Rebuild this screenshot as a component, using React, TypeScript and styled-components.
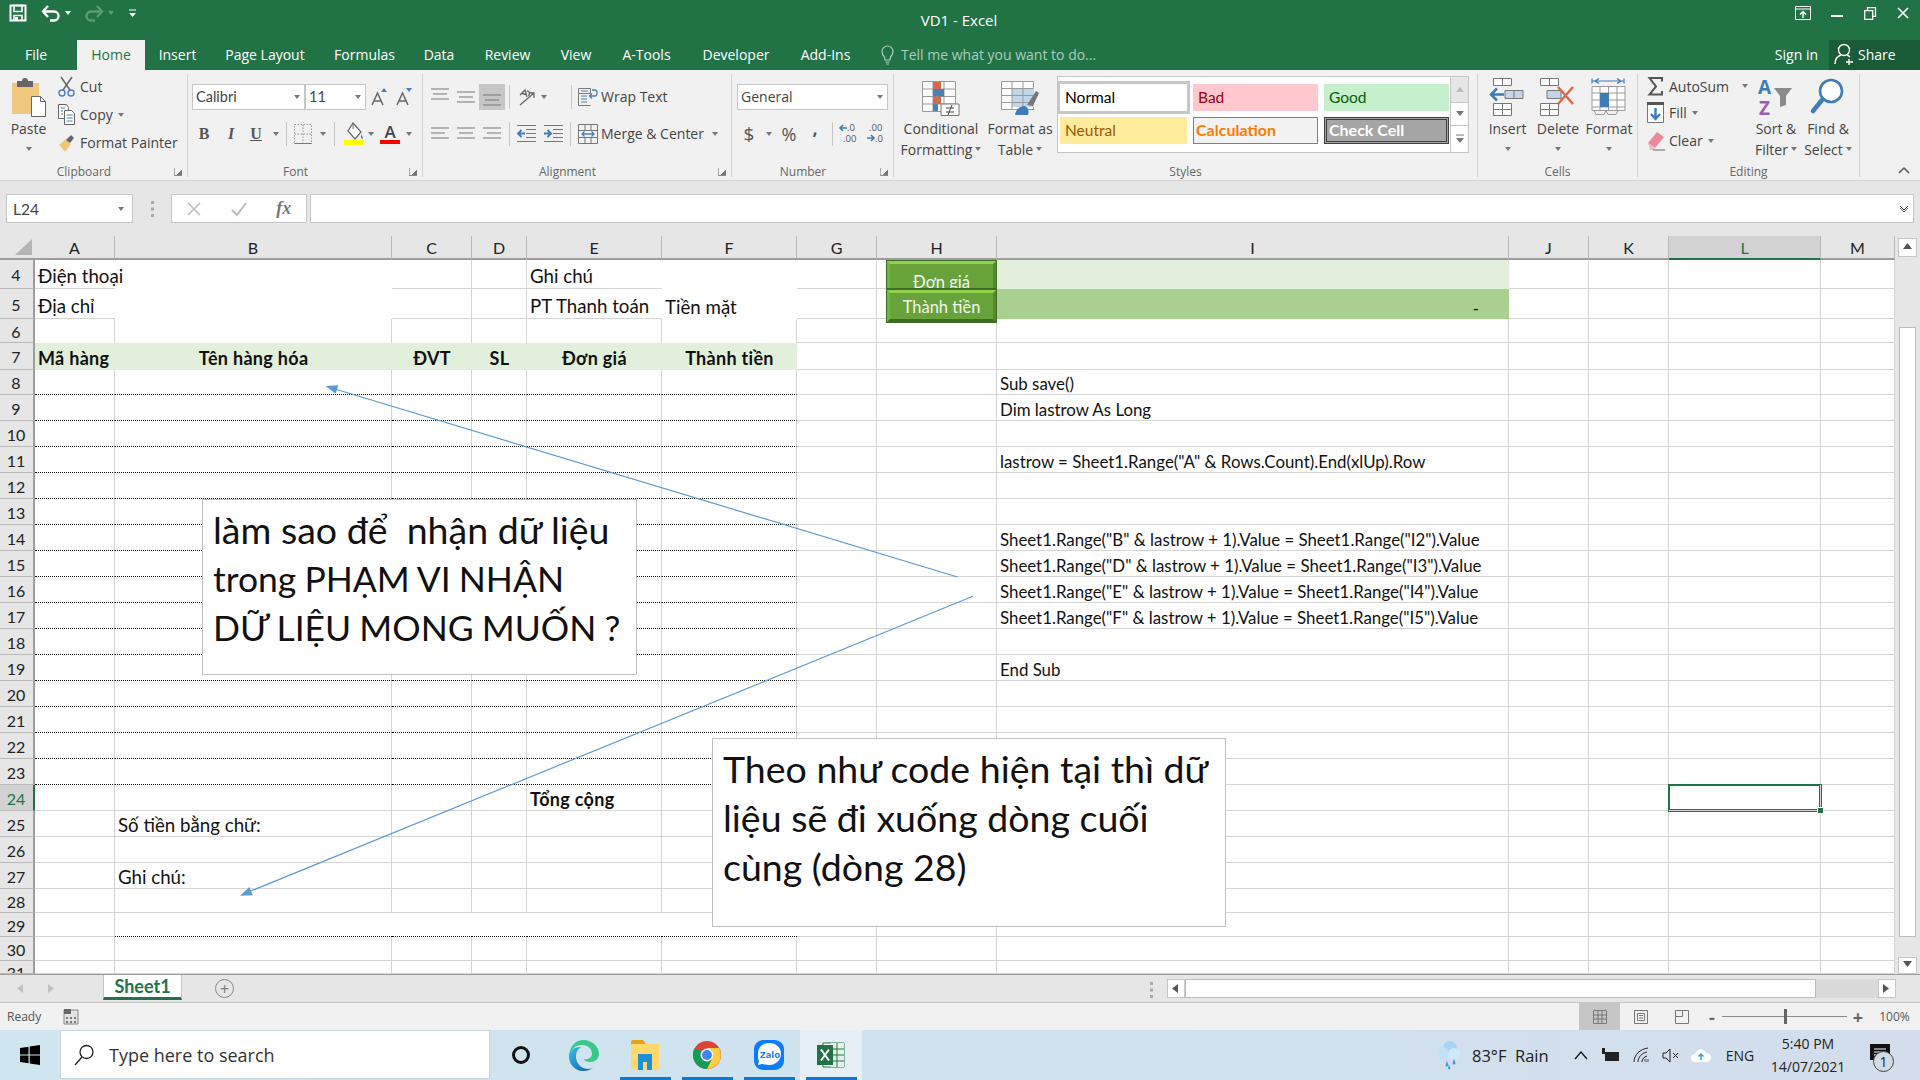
import React from 'react'
import styled, { createGlobalStyle } from 'styled-components'

const Global = createGlobalStyle`
  html, body { margin: 0; padding: 0; width: 1920px; height: 1080px; overflow: hidden; }
  body { font-family: "Open Sans", "Noto Sans", sans-serif; background: #fff; }
  svg { display: block; overflow: visible; }
`

const CELL_FONT = '"Lato", "Noto Sans", sans-serif'
const GREEN = '#217346'
const LINE = '#D4D4D4'

const Window = styled.div`
  width: 1920px;
  height: 1080px;
  display: flex;
  flex-direction: column;
  overflow: hidden;
`

/* ---------- title bar + tabs ---------- */
const TitleBar = styled.div`
  height: 40px;
  background: ${GREEN};
  color: #fff;
  display: grid;
  grid-template-columns: 1fr auto 1fr;
  align-items: flex-start;
`
const Qat = styled.div`
  display: flex;
  align-items: center;
  height: 26px;
  padding-left: 9px;
  gap: 4px;
`
const Title = styled.div`
  font-size: 15px;
  line-height: 41px;
  margin-left: -2px;
`
const WinButtons = styled.div`
  display: flex;
  justify-content: flex-end;
  padding-right: 1px;
`
const WinButton = styled.span`
  width: 33px;
  height: 26px;
  display: flex;
  align-items: center;
  justify-content: center;
`
const TabRow = styled.div`
  height: 30px;
  background: ${GREEN};
  display: flex;
`
const Tab = styled.div<{ $w: number; $active?: boolean; $shift?: number }>`
  width: ${p => p.$w}px;
  display: flex;
  align-items: center;
  justify-content: center;
  padding-right: ${p => p.$shift ?? 0}px;
  box-sizing: border-box;
  font-size: 14px;
  color: ${p => (p.$active ? GREEN : '#fff')};
  background: ${p => (p.$active ? '#F1F1F1' : 'transparent')};
`
const TellMe = styled.div`
  display: flex;
  align-items: center;
  gap: 7px;
  margin-left: 15px;
  font-size: 14px;
  color: #a9cdb9;
  flex: 1;
`
const SignIn = styled.div`
  color: #fff;
  font-size: 14px;
  display: flex;
  align-items: center;
  margin-right: 11px;
`
const Share = styled.div`
  width: 91px;
  background: #1a5c37;
  color: #fff;
  font-size: 14px;
  display: flex;
  align-items: center;
  gap: 2px;
  padding-left: 5px;
  box-sizing: border-box;
`

/* ---------- ribbon ---------- */
const Ribbon = styled.div`
  height: 112px;
  box-sizing: border-box;
  background: #F1F1F1;
  border-bottom: 1px solid #D2D2D2;
  padding-top: 4px;
  display: flex;
  color: #444;
  font-size: 14px;
`
const Group = styled.div<{ $w: number }>`
  width: ${p => p.$w}px;
  height: 103px;
  box-sizing: border-box;
  border-right: 1px solid #D2D2D2;
  display: flex;
  flex-direction: column;
  flex-shrink: 0;
`
const GroupBody = styled.div<{ $pad?: number; $column?: boolean; $gap?: number; $top?: number }>`
  height: 91px;
  display: flex;
  flex-direction: ${p => (p.$column ? 'column' : 'row')};
  padding-left: ${p => p.$pad ?? 0}px;
  padding-top: ${p => p.$top ?? 0}px;
  gap: ${p => p.$gap ?? 0}px;
  box-sizing: border-box;
`
const GroupLabel = styled.div<{ $launch?: boolean }>`
  height: 12px;
  line-height: 12px;
  font-size: 12px;
  color: #666;
  text-align: center;
  position: relative;
  top: 1px;
  padding-right: ${p => (p.$launch ? 19 : 0)}px;
`
const Launcher = styled.span`
  position: absolute;
  right: 5px;
  top: 2px;
  width: 7px;
  height: 7px;
  border-left: 1px solid #aaa;
  border-bottom: 1px solid #888;
  background: linear-gradient(135deg, transparent 60%, #777 60%);
`
const Caret = styled.span<{ $tone?: string }>`
  display: inline-block;
  width: 0;
  height: 0;
  border-left: 3.5px solid transparent;
  border-right: 3.5px solid transparent;
  border-top: 4px solid ${p => p.$tone ?? '#777'};
  vertical-align: middle;
`
const LargeButton = styled.div<{ $w: number }>`
  width: ${p => p.$w}px;
  display: flex;
  flex-direction: column;
  align-items: center;
  white-space: nowrap;
`
const LargeIcon = styled.div`
  height: 42px;
  margin-bottom: 2px;
  display: flex;
  align-items: flex-end;
  justify-content: center;
`
const LargeText = styled.div`
  height: 21px;
  line-height: 21px;
`
const CaretLine = styled.div`
  height: 21px;
  display: flex;
  align-items: center;
  justify-content: center;
  gap: 3px;
`
const SmallColumn = styled.div<{ $w?: number }>`
  display: flex;
  flex-direction: column;
  margin-top: -1px;
  width: ${p => (p.$w ? `${p.$w}px` : 'auto')};
`
const SmallRow = styled.div<{ $h?: number }>`
  height: ${p => p.$h ?? 28}px;
  display: flex;
  align-items: center;
  gap: 5px;
  white-space: nowrap;
`
const SmallIcon = styled.span<{ $w?: number }>`
  width: ${p => p.$w ?? 18}px;
  display: flex;
  justify-content: center;
`
const WideCaret = styled(Caret)`
  margin-left: 8px;
`
const ToolRow = styled.div`
  display: flex;
  align-items: center;
  height: 26px;
`
const Tool = styled.span<{ $w: number; $active?: boolean }>`
  width: ${p => p.$w}px;
  height: 26px;
  flex-shrink: 0;
  display: flex;
  align-items: center;
  justify-content: center;
  background: ${p => (p.$active ? '#C6C6C6' : 'transparent')};
`
const ToolSep = styled.span<{ $w: number }>`
  width: ${p => p.$w}px;
  height: 24px;
  flex-shrink: 0;
  display: flex;
  justify-content: center;
  &::after {
    content: '';
    width: 1px;
    height: 100%;
    background: #C6C6C6;
  }
`
const Combo = styled.div<{ $w: number }>`
  width: ${p => p.$w}px;
  height: 26px;
  box-sizing: border-box;
  background: #fff;
  border: 1px solid #C6C6C6;
  display: flex;
  align-items: center;
  justify-content: space-between;
  padding: 0 4px 0 3px;
  flex-shrink: 0;
`
const ComboFont = styled.span`
  font-family: ${CELL_FONT};
  font-size: 14.5px;
  color: #444;
`
const BoldTool = styled.span<{ $italic?: boolean; $under?: boolean }>`
  font-family: "Liberation Serif", serif;
  font-weight: 700;
  font-size: 16px;
  color: #555;
  font-style: ${p => (p.$italic ? 'italic' : 'normal')};
  text-decoration: ${p => (p.$under ? 'underline' : 'none')};
`
const SymbolTool = styled.span<{ $size?: number; $lift?: number }>`
  font-family: "Open Sans", sans-serif;
  font-size: ${p => p.$size ?? 15}px;
  color: #555;
  margin-top: ${p => -(p.$lift ?? 0)}px;
`
const ColorA = styled.span<{ $bar: string }>`
  font-family: "Open Sans", sans-serif;
  font-size: 17px;
  line-height: 16px;
  font-weight: 600;
  color: #444;
  border-bottom: 4px solid ${p => p.$bar};
  width: 20px;
  text-align: center;
`
const Gallery = styled.div`
  width: 412px;
  height: 77px;
  margin-top: 2px;
  box-sizing: border-box;
  border: 1px solid #C6C6C6;
  background: #fff;
  display: flex;
  justify-content: space-between;
`
const StyleGrid = styled.div`
  display: grid;
  grid-template-columns: 127px 125px 125px;
  grid-template-rows: 27px 27px;
  column-gap: 6px;
  row-gap: 6px;
  padding: 7px 0 0 2px;
`
const StyleCell = styled.div<{ $bg: string; $fg: string; $bold?: boolean; $border?: string; $selected?: boolean }>`
  background: ${p => p.$bg};
  color: ${p => p.$fg};
  font-family: ${CELL_FONT};
  font-size: ${p => (p.$bold ? 16 : 15.5)}px;
  font-weight: ${p => (p.$bold ? 700 : 400)};
  border: ${p => p.$border ?? 'none'};
  box-shadow: ${p => (p.$selected ? '0 0 0 3px #C6C6C6' : 'none')};
  display: flex;
  align-items: center;
  padding: 0 0 1px ${p => (p.$border ? 2 : 5)}px;
  box-sizing: border-box;
  white-space: nowrap;
`
const GalleryScroll = styled.div`
  width: 17px;
  border-left: 1px solid #C6C6C6;
  display: grid;
  grid-template-rows: 26px 23px 1fr;
`
const GalleryButton = styled.span<{ $bg?: string }>`
  background: ${p => p.$bg ?? '#fff'};
  border-bottom: 1px solid #C6C6C6;
  display: flex;
  align-items: center;
  justify-content: center;
  &:last-child { border-bottom: none; }
`
const Collapse = styled.div`
  flex: 1;
  height: 103px;
  display: flex;
  align-items: flex-end;
  justify-content: flex-end;
  padding: 0 10px 3px 0;
  box-sizing: border-box;
`

/* ---------- formula bar ---------- */
const FormulaBar = styled.div`
  height: 55px;
  box-sizing: border-box;
  background: #E6E6E6;
  padding: 13px 6px 13px 6px;
  display: flex;
`
const Box = styled.div<{ $w?: number }>`
  ${p => (p.$w ? `width: ${p.$w}px;` : 'flex: 1;')}
  height: 29px;
  box-sizing: border-box;
  background: #fff;
  border: 1px solid #C6C6C6;
  display: flex;
  align-items: center;
`
const NameBox = styled(Box)`
  justify-content: space-between;
  padding: 0 8px 0 6px;
  font-family: ${CELL_FONT};
  font-size: 15.5px;
  color: #444;
`
const Dots = styled.div`
  width: 38px;
  display: flex;
  align-items: center;
  justify-content: center;
`
const FormulaButton = styled.span`
  width: 45px;
  display: flex;
  justify-content: center;
`
const Fx = styled.span`
  font-family: "Liberation Serif", serif;
  font-style: italic;
  font-size: 18px;
  font-weight: 700;
  color: #777;
`
const FormulaInput = styled(Box)`
  margin-left: 3px;
  justify-content: flex-end;
  padding-right: 4px;
`

/* ---------- sheet ---------- */
const SheetArea = styled.div`
  height: 738px;
  display: flex;
`
const SheetView = styled.div`
  position: relative;
  width: 1895px;
  height: 738px;
  overflow: hidden;
  background: #fff;
`
const Grid = styled.div<{ $cols: string; $rows: string }>`
  display: grid;
  grid-template-columns: ${p => p.$cols};
  grid-template-rows: ${p => p.$rows};
`
const Corner = styled.div`
  background: #E6E6E6;
  border-bottom: 2px solid #9D9D9D;
  box-sizing: border-box;
  display: flex;
  align-items: flex-end;
  justify-content: flex-end;
  padding: 0 3px 3px 0;
`
const ColHead = styled.div<{ $sel?: boolean }>`
  background: ${p => (p.$sel ? '#D2D2D2' : '#E6E6E6')};
  border-right: 1px solid #B9B9B9;
  border-bottom: 2px solid ${p => (p.$sel ? GREEN : '#9D9D9D')};
  box-sizing: border-box;
  font-family: ${CELL_FONT};
  font-size: 16px;
  color: ${p => (p.$sel ? GREEN : '#222')};
  display: flex;
  align-items: center;
  justify-content: center;
`
const RowHead = styled.div<{ $sel?: boolean; $cut?: boolean }>`
  background: ${p => (p.$sel ? '#D2D2D2' : '#E6E6E6')};
  border-right: ${p => (p.$sel ? `2px solid ${GREEN}` : '2px solid #9D9D9D')};
  border-bottom: 1px solid #B9B9B9;
  box-sizing: border-box;
  font-family: ${CELL_FONT};
  font-size: 16px;
  line-height: 20px;
  color: ${p => (p.$sel ? GREEN : '#222')};
  display: flex;
  align-items: ${p => (p.$cut ? 'flex-start' : 'center')};
  justify-content: center;
  padding: 2px 1px 0 0;
  overflow: hidden;
  min-height: 0;
`
const Cell = styled.div<{
  $bg?: string
  $right?: boolean
  $bottom?: 'solid' | 'dotted' | 'none'
  $bold?: boolean
  $code?: boolean
  $raised?: boolean
  $align?: 'left' | 'center' | 'right'
  $selected?: boolean
}>`
  box-sizing: border-box;
  background: ${p => p.$bg ?? 'transparent'};
  border-right: ${p => (p.$right ? `1px solid ${LINE}` : 'none')};
  border-bottom: ${p =>
    p.$bottom === 'dotted' ? '1px dotted #111' : p.$bottom === 'none' ? 'none' : `1px solid ${LINE}`};
  box-shadow: ${p => (p.$selected ? `0 0 0 1px ${GREEN}, inset 0 0 0 1px ${GREEN}` : 'none')};
  z-index: ${p => (p.$selected ? 1 : 'auto')};
  position: relative;
  min-width: 0;
  min-height: 0;
  display: flex;
  align-items: flex-end;
  justify-content: ${p => (p.$align === 'center' ? 'center' : p.$align === 'right' ? 'flex-end' : 'flex-start')};
  padding: 0 ${p => (p.$align === 'right' ? 30 : 3)}px ${p => (p.$code ? 0 : p.$raised ? 2 : 1)}px 3px;
  font-family: ${CELL_FONT};
  font-size: ${p => (p.$code ? 16.85 : p.$bold ? 18 : 18.7)}px;
  letter-spacing: ${p => (p.$bold ? 0.3 : 0)}px;
  line-height: 20px;
  font-weight: ${p => (p.$bold ? 700 : 400)};
  color: #111;
  white-space: nowrap;
  &::after {
    content: ${p => (p.$selected ? "''" : 'none')};
    position: absolute;
    right: -4px;
    bottom: -4px;
    width: 7px;
    height: 7px;
    background: ${GREEN};
    border: 1px solid #fff;
    box-sizing: border-box;
  }
`
const ArrowLayer = styled.svg`
  position: absolute;
  left: 0;
  top: 0;
  pointer-events: none;
`
const ShapeStack = styled.div`
  position: absolute;
  left: 886px;
  top: 24px;
  width: 111px;
  display: flex;
  flex-direction: column;
`
const Bevel = styled.div<{ $h: number; $clip?: boolean }>`
  height: ${p => p.$h}px;
  box-sizing: border-box;
  background: #68A23A;
  border-style: solid;
  border-width: ${p => (p.$clip ? '4px 4px 1px' : '4px')};
  border-color: #8ED24E #57892F #3F6B24 #76B145;
  outline: 1px solid #3F6B24;
  outline-offset: -1px;
  color: #F4F9EE;
  font-family: ${CELL_FONT};
  font-size: 16.5px;
  line-height: 20px;
  text-align: center;
  white-space: nowrap;
  overflow: hidden;
  padding-top: ${p => (p.$clip ? 8 : 4)}px;
`
const Note = styled.div<{ $x: number; $y: number; $w: number; $h: number }>`
  position: absolute;
  left: ${p => p.$x}px;
  top: ${p => p.$y}px;
  width: ${p => p.$w}px;
  height: ${p => p.$h}px;
  box-sizing: border-box;
  background: #fff;
  border: 1px solid #BFBFBF;
  padding: 5px 10px;
  font-family: ${CELL_FONT};
  font-size: 37.5px;
  line-height: 49px;
  color: #111;
`
const NoteLine = styled.div<{ $caps?: boolean }>`
  height: 40px;
  margin-bottom: 9px;
  line-height: 49px;
  white-space: pre;
  word-spacing: ${p => (p.$caps ? '-1px' : '0')};
  font-size: ${p => (p.$caps ? 35.5 : 37.5)}px;
`
const VScroll = styled.div`
  width: 25px;
  height: 738px;
  background: #E6E6E6;
  display: flex;
  flex-direction: column;
  align-items: center;
  padding-top: 2px;
  box-sizing: border-box;
`
const ScrollButton = styled.div<{ $h: number }>`
  width: 19px;
  height: ${p => p.$h}px;
  background: #fff;
  border: 1px solid #C6C6C6;
  box-sizing: border-box;
  display: flex;
  align-items: center;
  justify-content: center;
`
const VThumb = styled.div`
  width: 17px;
  height: 610px;
  margin: 70px 0 20px;
  background: #fff;
  border: 1px solid #BDBDBD;
  box-sizing: border-box;
`

/* ---------- sheet tabs + status ---------- */
const SheetTabs = styled.div`
  height: 29px;
  box-sizing: border-box;
  background: #E6E6E6;
  border-top: 1px solid #9D9D9D;
  border-bottom: 1px solid #C6C6C6;
  display: flex;
  align-items: flex-start;
`
const TabNav = styled.div`
  width: 103px;
  height: 27px;
  display: flex;
  align-items: center;
  justify-content: center;
  gap: 22px;
  padding-right: 30px;
  box-sizing: border-box;
`
const SheetTab = styled.div`
  width: 79px;
  height: 25px;
  box-sizing: border-box;
  background: #fff;
  border-bottom: 3px solid ${GREEN};
  border-left: 1px solid #C6C6C6;
  border-right: 1px solid #C6C6C6;
  color: ${GREEN};
  font-family: ${CELL_FONT};
  font-weight: 700;
  font-size: 18px;
  line-height: 22px;
  text-align: center;
`
const AddSheet = styled.div`
  margin-left: 33px;
  margin-top: 4px;
  width: 19px;
  height: 19px;
  box-sizing: border-box;
  border: 1.5px solid #8a8a8a;
  border-radius: 50%;
  display: flex;
  align-items: center;
  justify-content: center;
  color: #777;
  font-size: 16px;
  line-height: 16px;
`
const TabDots = styled.div`
  margin-left: 916px;
  margin-top: 7px;
`
const HScroll = styled.div`
  margin-left: 14px;
  margin-top: 4px;
  width: 729px;
  height: 19px;
  display: flex;
`
const HButton = styled.div`
  width: 18px;
  background: #fff;
  display: flex;
  align-items: center;
  justify-content: center;
  border: 1px solid #C6C6C6;
  box-sizing: border-box;
`
const HThumb = styled.div`
  width: 631px;
  background: #fff;
  border: 1px solid #BDBDBD;
  box-sizing: border-box;
`
const HTrack = styled.div`
  flex: 1;
  background: #DADADA;
`
const StatusBar = styled.div`
  height: 27px;
  background: #F1F1F1;
  display: flex;
  align-items: center;
  font-size: 12px;
  color: #555;
  padding-left: 7px;
`
const StatusMacro = styled.span`
  margin-left: 22px;
`
const ViewButtons = styled.div`
  margin-left: auto;
  display: flex;
  align-items: center;
  height: 27px;
`
const ViewButton = styled.span<{ $active?: boolean; $w?: number }>`
  width: ${p => p.$w ?? 41}px;
  height: 27px;
  display: flex;
  align-items: center;
  justify-content: center;
  background: ${p => (p.$active ? '#C6C6C6' : 'transparent')};
`
const ZoomSign = styled.b`
  font-size: 18px;
  color: #666;
`
const ZoomSlider = styled.div`
  position: relative;
  width: 125px;
  height: 1px;
  background: #8a8a8a;
`
const ZoomThumb = styled.span`
  position: absolute;
  left: 62px;
  top: -7px;
  width: 3px;
  height: 15px;
  background: #666;
`

/* ---------- taskbar ---------- */
const Taskbar = styled.div`
  height: 50px;
  background: linear-gradient(90deg, #CFE5EF 0%, #CFE3EE 50%, #D3DDEB 100%);
  display: flex;
  align-items: stretch;
`
const StartButton = styled.div`
  width: 60px;
  display: flex;
  align-items: center;
  justify-content: center;
`
const SearchBox = styled.div`
  width: 430px;
  height: 49px;
  box-sizing: border-box;
  background: #fff;
  border: 1px solid #C9D3D9;
  display: flex;
  align-items: center;
  padding-left: 13px;
  gap: 15px;
  font-size: 18px;
  color: #333;
`
const TaskItem = styled.div<{ $running?: boolean; $active?: boolean }>`
  width: 62px;
  position: relative;
  display: flex;
  align-items: center;
  justify-content: center;
  background: ${p => (p.$active ? '#E4F0F5' : 'transparent')};
  &::after {
    content: ${p => (p.$running ? "''" : 'none')};
    position: absolute;
    left: 6px;
    right: 5px;
    bottom: 0;
    height: 3px;
    background: #0F78D4;
  }
`
const Tray = styled.div`
  margin-left: auto;
  display: flex;
  align-items: center;
`
const TrayTool = styled.span<{ $w: number }>`
  width: ${p => p.$w}px;
  display: flex;
  align-items: center;
  justify-content: center;
  font-size: 14px;
  color: #222;
`
const Weather = styled.span`
  font-size: 16.5px;
  color: #222;
  width: 83px;
  margin: 0 14px 0 5px;
  white-space: pre;
`
const Clock = styled.div`
  width: 88px;
  font-size: 14px;
  color: #222;
  text-align: center;
  line-height: 23px;
`
const Notify = styled.div`
  width: 68px;
  height: 50px;
  position: relative;
  display: flex;
  align-items: center;
  justify-content: center;
  padding-right: 12px;
  box-sizing: border-box;
`
const NotifyBadge = styled.span`
  position: absolute;
  left: 21px;
  top: 21px;
  width: 21px;
  height: 21px;
  box-sizing: border-box;
  border: 1px solid #444;
  border-radius: 50%;
  background: #D0DBE8;
  font-size: 14px;
  color: #222;
  text-align: center;
  line-height: 19px;
`

/* ---------- icons ---------- */
const Svg: React.FC<{ w: number; h: number; children: React.ReactNode }> = ({ w, h, children }) => (
  <svg width={w} height={h} viewBox={`0 0 ${w} ${h}`} fill="none">
    {children}
  </svg>
)

const SaveIcon = () => (
  <Svg w={18} h={18}>
    <path d="M1.5 1.5h15v15h-15z" stroke="#fff" strokeWidth="2" />
    <path d="M5 1.5h8v6H5zM5 16.5v-5h8v5" stroke="#fff" strokeWidth="1.6" />
    <path d="M6 13h3v3H6z" fill="#fff" />
  </Svg>
)
const UndoIcon = ({ tone }: { tone: string }) => (
  <Svg w={20} h={18}>
    <path d="M2 7.5h11a4.5 4.5 0 0 1 0 9H9" stroke={tone} strokeWidth="2.4" />
    <path d="M7 2L2 7.5 7 13" stroke={tone} strokeWidth="2.4" />
  </Svg>
)
const RedoIcon = ({ tone }: { tone: string }) => (
  <Svg w={20} h={18}>
    <path d="M18 7.5H7a4.5 4.5 0 0 0 0 9h4" stroke={tone} strokeWidth="2.4" />
    <path d="M13 2l5 5.5-5 5.5" stroke={tone} strokeWidth="2.4" />
  </Svg>
)
const CustomizeIcon = () => (
  <Svg w={9} h={10}>
    <path d="M1 2h7" stroke="#fff" />
    <path d="M1 5h7L4.5 9z" fill="#fff" />
  </Svg>
)
const RibbonOptions = () => (
  <Svg w={17} h={15}>
    <path d="M.5.5h15v13H.5z" stroke="#fff" />
    <path d="M.5 3h15" stroke="#fff" />
    <path d="M8 12V6M5 8.5L8 5.5l3 3" stroke="#fff" strokeWidth="1.4" />
  </Svg>
)
const Minimize = () => (
  <Svg w={12} h={12}>
    <path d="M0 9h12" stroke="#fff" strokeWidth="2" />
  </Svg>
)
const Restore = () => (
  <Svg w={12} h={13}>
    <path d="M.7 3.7h8v8.6h-8zM3.5 3.5V.7h8v8.6H9" stroke="#fff" strokeWidth="1.3" />
  </Svg>
)
const CloseX = () => (
  <Svg w={12} h={12}>
    <path d="M1 1l10 10M11 1L1 11" stroke="#fff" strokeWidth="1.7" />
  </Svg>
)
const Bulb = () => (
  <Svg w={13} h={20}>
    <path d="M3.5 12C2 10.5 1 9 1 6.5a5.5 5.5 0 0 1 11 0C12 9 11 10.5 9.5 12L9 15H4z" stroke="#a9cdb9" strokeWidth="1.2" />
    <path d="M4.5 17h4M5 19h3" stroke="#a9cdb9" />
  </Svg>
)
const ShareIcon = () => (
  <Svg w={22} h={23}>
    <circle cx="10" cy="7" r="5.5" stroke="#fff" strokeWidth="1.4" />
    <path d="M1 21c0-5 3-8 6-9M13 12c1 .4 2 1 3 2" stroke="#fff" strokeWidth="1.4" />
    <path d="M15 16v6M12 19h7" stroke="#fff" strokeWidth="1.4" />
  </Svg>
)
const PasteIcon = () => (
  <Svg w={36} h={38}>
    <path d="M1 5h27v31H1z" fill="#EFC77F" />
    <path d="M6 3h5a3 3 0 0 1 6 0h5v6H6z" fill="#666" />
    <path d="M20.5 18.5h9l5 5v15h-14z" fill="#fff" stroke="#666" />
    <path d="M29.5 18.5v5h5" stroke="#666" />
  </Svg>
)
const CutIcon = () => (
  <Svg w={17} h={22}>
    <path d="M3 1l9 13M14 1L5 14" stroke="#666" strokeWidth="1.5" />
    <circle cx="4" cy="17" r="3" stroke="#4A80B8" strokeWidth="1.4" />
    <circle cx="13" cy="17" r="3" stroke="#4A80B8" strokeWidth="1.4" />
  </Svg>
)
const CopyIcon = () => (
  <Svg w={17} h={21}>
    <path d="M.5.5h8l2 3v11H.5z" fill="#fff" stroke="#666" />
    <path d="M6.5 6.5h7l3 3v11h-10z" fill="#fff" stroke="#666" />
    <path d="M3 4h4M3 7h2M3 10h2M8.5 11h6M8.5 14h6M8.5 17h6" stroke="#4A80B8" />
  </Svg>
)
const PainterIcon = () => (
  <Svg w={18} h={20}>
    <path d="M2 12l7-6 5 5-6 8c-2-3-4-5-6-7z" fill="#EFC77F" />
    <path d="M9 7l5-5 3 3-4 5z" fill="#666" />
  </Svg>
)
const GrowA = ({ up }: { up?: boolean }) => (
  <Svg w={16} h={20}>
    <path d="M1 18L6.5 6 12 18M3 14h7" stroke="#666" strokeWidth="1.5" />
    <path d={up ? 'M10 5l3-4 3 4z' : 'M10 1h6l-3 4z'} fill="#4A80B8" />
  </Svg>
)
const Lines = ({ y = 0, align = 'center' }: { y?: number; align?: 'left' | 'center' | 'right' }) => {
  const midX = align === 'left' ? 0 : align === 'right' ? 4 : 2
  return (
    <Svg w={18} h={16}>
      <path d={`M0 ${y + 2}h18`} stroke="#777" />
      <path d={`M${midX} ${y + 7}h14`} stroke="#777" />
      <path d={`M0 ${y + 12}h18`} stroke="#777" />
    </Svg>
  )
}
const OrientIcon = () => (
  <Svg w={20} h={20}>
    <path d="M3 8l5-5 2 7M5 6.5l4 1" stroke="#666" strokeWidth="1.3" />
    <path d="M10 4c3 0 3 3 1.5 5" stroke="#666" strokeWidth="1.3" />
    <path d="M3 18L17 6M12 6h5v5" stroke="#666" strokeWidth="1.3" />
  </Svg>
)
const WrapIcon = () => (
  <Svg w={20} h={20}>
    <path d="M.5 1.5h12v5H.5zM.5 6.5v12h12" stroke="#777" />
    <path d="M3 4h7M3 9h6M3 12h6M3 15h6" stroke="#4A80B8" />
    <path d="M14 3h3q2 0 2 3t-2 3h-5M14 6.5L11.5 9l2.5 2.5" stroke="#4A80B8" strokeWidth="1.3" />
  </Svg>
)
const MergeIcon = () => (
  <Svg w={20} h={20}>
    <path d="M.5.5h19v19H.5zM.5 6.5h19M.5 13.5h19M7 .5v6M13 .5v6M7 13.5v6M13 13.5v6" stroke="#777" />
    <path d="M4 10h12M6.5 7.5L4 10l2.5 2.5M13.5 7.5L16 10l-2.5 2.5" stroke="#4A80B8" strokeWidth="1.3" />
  </Svg>
)
const IndentIcon = ({ out }: { out?: boolean }) => (
  <Svg w={19} h={19}>
    <path d="M0 1.5h19M0 17.5h19M9 5.5h10M9 9.5h10M9 13.5h10" stroke="#777" />
    <path
      d={out ? 'M8 9.5H1M4.5 6L1 9.5 4.5 13' : 'M0 9.5h7M3.5 6L7 9.5 3.5 13'}
      stroke="#3E7CB9"
      strokeWidth="1.8"
    />
  </Svg>
)
const BordersIcon = () => (
  <Svg w={18} h={20}>
    <path d="M.5.5h17v19H.5zM9 .5v19M.5 10h17" stroke="#999" strokeDasharray="1.5 1.5" />
    <path d="M.5 19.5h17" stroke="#777" />
  </Svg>
)
const FillIcon = () => (
  <Svg w={20} h={23}>
    <path d="M9 1l8 9-6 7-7-8z" fill="#fff" stroke="#666" strokeWidth="1.2" />
    <path d="M9 1v6" stroke="#666" />
    <path d="M17 12c1 2 2 3 2 4s-1 1-2 0z" fill="#4A80B8" />
    <path d="M0 18h20v5H0z" fill="#FFFF00" />
  </Svg>
)
const DecIcon = ({ more }: { more?: boolean }) => (
  <Svg w={24} h={24}>
    <text x={more ? 7 : 11} y="9" fontSize="9.5" fontFamily="Open Sans" fill="#555">
      {more ? '.00' : '.0'}
    </text>
    <text x={more ? 13 : 7} y="20" fontSize="9.5" fontFamily="Open Sans" fill="#555">
      {more ? '.0' : '.00'}
    </text>
    <path
      d={more ? 'M5 16h7M9 13l3 3-3 3' : 'M11 6H4M7 3L4 6l3 3'}
      stroke="#3E7CB9"
      strokeWidth="1.6"
    />
  </Svg>
)
const CondIcon = () => (
  <Svg w={38} h={35}>
    <path d="M.5.5h33v30H.5z" fill="#fff" stroke="#999" />
    <path d="M.5 8h33M.5 15.5h33M.5 23h33M11 .5v30M22 .5v30" stroke="#999" />
    <path d="M11 1h8v7h-8z" fill="#D9694A" />
    <path d="M11 8h11v7.5H11z" fill="#4A80B8" />
    <path d="M11 15.5h8V23h-8z" fill="#D9694A" />
    <path d="M11 23h5v7h-5z" fill="#4A80B8" />
    <path d="M19 23h18v11.5H19z" fill="#fff" stroke="#777" />
    <path d="M24 27h8M24 31h8M26 34l4-10" stroke="#444" />
  </Svg>
)
const TableIcon = () => (
  <Svg w={38} h={35}>
    <path d="M.5.5h32v28H.5z" fill="#fff" stroke="#999" />
    <path d="M11 7h22v19H11z" fill="#C3D5EA" />
    <path d="M.5 7.5h32M.5 14.5h32M.5 21.5h32M11 .5v28M22 .5v28" stroke="#999" />
    <path d="M26 24l9-14 3 2-6 13z" fill="#777" />
    <path d="M14 34c1-6 5-9 10-9 4 2 4 6 3 9z" fill="#3E7CB9" />
  </Svg>
)
const InsertIcon = () => (
  <Svg w={36} h={38}>
    <path d="M3.5.5h18v7h-18zM12.5.5v7" fill="#fff" stroke="#777" />
    <path d="M15 12.5h18v8H15zM24 12.5v8" fill="#C3D5EA" stroke="#777" />
    <path d="M3.5 25.5h18v12h-18zM3.5 31.5h18M12.5 25.5v12" fill="#fff" stroke="#777" />
    <path d="M14 16.5H1M7 10.5L1 16.5l6 6" stroke="#3E7CB9" strokeWidth="2.5" />
  </Svg>
)
const DeleteIcon = () => (
  <Svg w={36} h={38}>
    <path d="M.5.5h18v7H.5zM9.5.5v7" fill="#fff" stroke="#777" />
    <path d="M7 12.5h14v8H7z" fill="#C3D5EA" stroke="#777" />
    <path d="M.5 25.5h18v12H.5zM.5 31.5h18M9.5 25.5v12" fill="#fff" stroke="#777" />
    <path d="M18 9l15 17M33 9L18 26" stroke="#D9694A" strokeWidth="2.5" />
  </Svg>
)
const FormatIcon = () => (
  <Svg w={36} h={38}>
    <path d="M1 3h32M1 .5v5M33 .5v5M8 .5L4 3l4 2.5M26 .5L30 3l-4 2.5" stroke="#3E7CB9" strokeWidth="1.2" />
    <path d="M1 8.5h33v24H1z" fill="#fff" stroke="#999" />
    <path d="M1 15h33M1 22h33M1 29h33M9 8.5v24M26 8.5v24M17.5 8.5v24" stroke="#999" />
    <path d="M9 15h9v14H9z" fill="#3E7CB9" />
    <path d="M3 32.5l2 4h8l2-4M15 32.5l2 4h8l2-4" stroke="#999" />
  </Svg>
)
const SigmaIcon = () => (
  <Svg w={15} h={19}>
    <path d="M14 4.5V1H1.5L8 9.5 1.5 17.5H14V14" stroke="#555" strokeWidth="2" />
  </Svg>
)
const FillDown = () => (
  <Svg w={17} h={21}>
    <path d="M.5.5h16v20H.5z" fill="#fff" stroke="#777" />
    <path d="M0 0h17v3H0z" fill="#555" />
    <path d="M8.5 6v11M4 12l4.5 5 4.5-5" stroke="#3E7CB9" strokeWidth="2.4" />
  </Svg>
)
const Eraser = () => (
  <Svg w={18} h={20}>
    <path d="M1 12l9-11 7 5-9 11z" fill="#EB8A9A" />
    <path d="M1 12l7 5-1.5 2H3z" fill="#F3B7C0" />
    <path d="M6 19h12" stroke="#666" />
  </Svg>
)
const SortIcon = () => (
  <Svg w={38} h={38}>
    <text x="1" y="16" fontSize="19" fontWeight="700" fontFamily="Open Sans" fill="#3E7CB9">
      A
    </text>
    <text x="2" y="37" fontSize="19" fontWeight="700" fontFamily="Open Sans" fill="#9A5FB5">
      Z
    </text>
    <path d="M17 10h18l-6 8v9l-6 2V18z" fill="#8a8a8a" />
  </Svg>
)
const FindIcon = () => (
  <Svg w={36} h={38}>
    <circle cx="21" cy="13" r="11" fill="#fff" stroke="#3E7CB9" strokeWidth="2.6" />
    <path d="M12 22L3 33" stroke="#3E7CB9" strokeWidth="4.5" strokeLinecap="round" />
  </Svg>
)
const ChevronUp = () => (
  <Svg w={12} h={8}>
    <path d="M1 7l5-5 5 5" stroke="#555" strokeWidth="1.5" />
  </Svg>
)
const ChevronDown = () => (
  <Svg w={10} h={8}>
    <path d="M1 1l4 4 4-4M1 3l4 4 4-4" stroke="#555" />
  </Svg>
)
const GripDots = () => (
  <Svg w={3} h={16}>
    <path d="M0 0h3v3H0zM0 6.5h3v3H0zM0 13h3v3H0z" fill="#A9A9A9" />
  </Svg>
)
const XMark = () => (
  <Svg w={14} h={14}>
    <path d="M1 1l12 12M13 1L1 13" stroke="#BBB" strokeWidth="1.6" />
  </Svg>
)
const CheckMark = () => (
  <Svg w={16} h={14}>
    <path d="M1 8l5 5L15 1" stroke="#BBB" strokeWidth="2" />
  </Svg>
)
const CornerTriangle = () => (
  <Svg w={17} h={16}>
    <path d="M17 0v16H0z" fill="#B5B5B5" />
  </Svg>
)
const MiniTri = ({ dir, tone = '#555' }: { dir: 'up' | 'down' | 'left' | 'right'; tone?: string }) => {
  const d = { up: 'M0 6L4.5 0 9 6z', down: 'M0 0h9L4.5 6z', left: 'M6 0v9L0 4.5z', right: 'M0 0v9l6-4.5z' }
  return (
    <Svg w={9} h={9}>
      <path d={d[dir]} fill={tone} />
    </Svg>
  )
}
const GalleryUp = () => (
  <Svg w={8} h={5}>
    <path d="M0 5L4 0l4 5z" fill="#BBB" />
  </Svg>
)
const GalleryDown = () => (
  <Svg w={8} h={5}>
    <path d="M0 0h8L4 5z" fill="#777" />
  </Svg>
)
const GalleryMore = () => (
  <Svg w={8} h={9}>
    <path d="M0 1h8" stroke="#777" />
    <path d="M0 4h8L4 9z" fill="#777" />
  </Svg>
)
const MacroIcon = () => (
  <Svg w={16} h={15}>
    <path d="M1 1h14v14H1z" fill="#E3E3E3" stroke="#888" />
    <path d="M1 0h7v5H1z" fill="#666" />
    <path d="M3 8h2v2H3zM7 8h2v2H7zM11 8h2v2h-2zM3 12h2v2H3zM7 12h2v2H7zM11 12h2v2h-2z" fill="#777" />
  </Svg>
)
const NormalView = () => (
  <Svg w={14} h={14}>
    <path d="M.5.5h13v13H.5zM5 .5v13M9 .5v13M.5 5h13M.5 9h13" stroke="#777" />
  </Svg>
)
const PageView = () => (
  <Svg w={14} h={14}>
    <path d="M.5.5h13v13H.5z" stroke="#777" />
    <path d="M3.5 3.5h7v7h-7zM5 5.5h4M5 8h4" stroke="#777" />
  </Svg>
)
const BreakView = () => (
  <Svg w={14} h={14}>
    <path d="M.5.5h13v13H.5zM7.5.5v6H.5" stroke="#777" />
  </Svg>
)
const ArrowHead = ({ x, y, angle }: { x: number; y: number; angle: number }) => (
  <path d="M0 0L12-4.5 12 4.5z" fill="#5B9BD5" transform={`translate(${x} ${y}) rotate(${angle})`} />
)

const WinLogo = () => (
  <Svg w={20} h={20}>
    <path d="M0 3l8.5-1.2v7.7H0zM9.7 1.6L20 0v9.5H9.7zM0 10.6h8.5v7.700L0 17zM9.7 10.6H20V20L9.7 18.500z" fill="#000" />
  </Svg>
)
const SearchGlyph = () => (
  <Svg w={20} h={22}>
    <circle cx="12.5" cy="8" r="6.5" stroke="#222" strokeWidth="1.3" />
    <path d="M8 13L1 21" stroke="#222" strokeWidth="1.3" />
  </Svg>
)
const CortanaRing = () => (
  <Svg w={20} h={20}>
    <circle cx="10" cy="10" r="7.5" stroke="#111" strokeWidth="3" />
  </Svg>
)
const EdgeIcon = () => (
  <Svg w={31} h={31}>
    <defs>
      <linearGradient id="edgeA" x1="0" y1="0" x2="1" y2="1">
        <stop offset="0" stopColor="#35C1F1" />
        <stop offset="1" stopColor="#0C59A4" />
      </linearGradient>
    </defs>
    <path d="M15.5 0C24 0 31 6.5 31 14c0 5-4 8-9 8-3 0-6-1-6-3 3 1 8-1 8-5C24 8 19 5 14 5 7 5 3 10 1.5 14 2 6 8 0 15.5 0z" fill="#3BC98A" />
    <path d="M1 14.5C3 8 9 6.5 13 7.5 7 10 6 20 12 26c3 3 9 4 13 2-3 2-6 3-10 3C7 31 0 24 1 14.5z" fill="url(#edgeA)" />
  </Svg>
)
const FolderIcon = () => (
  <Svg w={28} h={30}>
    <path d="M0 2a2 2 0 0 1 2-2h10l3 4H0z" fill="#E2A41E" />
    <path d="M0 4h28v26H0z" fill="#FFD76A" />
    <path d="M7 14h14v16h-5v-8h-4v8H7z" fill="#1C8FD9" />
  </Svg>
)
const ChromeIcon = () => (
  <Svg w={28} h={28}>
    <circle cx="14" cy="14" r="14" fill="#DB4437" />
    <path d="M14 14L1.9 7A14 14 0 0 0 14 28l6-10z" fill="#0F9D58" />
    <path d="M14 14l7 0-7 14A14 14 0 0 0 26 7H14z" fill="#FFCD40" />
    <circle cx="14" cy="14" r="6.5" fill="#fff" />
    <circle cx="14" cy="14" r="5" fill="#4285F4" />
  </Svg>
)
const ZaloIcon = () => (
  <Svg w={30} h={30}>
    <rect x="0" width="30" height="30" rx="9" fill="#0A7CFF" />
    <path d="M4 14c0-7 5-11 11-11 7 0 12 4 12 11 0 6-5 11-12 11-3 0-5-1-7-1l-4 1 1-4c-1-2-1-4-1-7z" fill="#fff" />
    <text x="6" y="18" fontSize="9.5" fontWeight="700" fontFamily="Open Sans" fill="#0A7CFF">
      Zalo
    </text>
  </Svg>
)
const ExcelIcon = () => (
  <Svg w={28} h={26}>
    <path d="M6 1h21v24H6z" fill="#fff" stroke="#217346" />
    <path d="M14 1h13v24H14z" fill="#E5F2EA" />
    <path d="M14 7h13M14 13h13M14 19h13M20 1v24" stroke="#217346" />
    <path d="M0 3h16v20H0z" fill="#217346" />
    <path d="M4 7.5l8 11M12 7.5l-8 11" stroke="#fff" strokeWidth="2" />
  </Svg>
)
const RainIcon = () => (
  <Svg w={26} h={30}>
    <circle cx="14" cy="8" r="7" fill="#A7D4F2" />
    <circle cx="7" cy="13" r="6" fill="#BFE0F6" />
    <circle cx="18" cy="14" r="6" fill="#CDE8F9" />
    <path d="M11 21l-1.5 4a1.5 1.5 0 0 0 3 0zM18 19l-1.5 4a1.5 1.5 0 0 0 3 0zM13 25l-1 3a1.2 1.2 0 0 0 2.5 0z" fill="#3E9BE0" />
  </Svg>
)
const TrayUp = () => (
  <Svg w={14} h={9}>
    <path d="M1 8l6-7 6 7" stroke="#111" strokeWidth="1.2" />
  </Svg>
)
const Battery = () => (
  <Svg w={18} h={16}>
    <path d="M4 5h14v9H4z" fill="#222" />
    <path d="M1 1h3v6H1z" fill="#222" />
  </Svg>
)
const Wifi = () => (
  <Svg w={17} h={16}>
    <path d="M1 15C1 8 7 2 15 1M5 15c0-5 4-9 9-10M9 15c0-3 2-5 5-6" stroke="#222" />
    <path d="M11 12h5v3h-5z" fill="#999" />
  </Svg>
)
const Speaker = () => (
  <Svg w={17} h={15}>
    <path d="M1 5h3l4-4v13l-4-4H1z" stroke="#222" />
    <path d="M11 5l5 5M16 5l-5 5" stroke="#222" />
  </Svg>
)
const Cloud = () => (
  <Svg w={20} h={14}>
    <path d="M4 14a4 4 0 0 1 0-8c1-4 9-7 11-1a4.5 4.5 0 0 1 1 9z" fill="#fff" />
    <path d="M10 12V6M7.5 8.5L10 6l2.5 2.5" stroke="#3E9BE0" strokeWidth="1.5" />
  </Svg>
)
const NotifyGlyph = () => (
  <Svg w={20} h={22}>
    <path d="M0 0h20v16l-5 0-5 4v-4H0z" fill="#111" />
    <path d="M4 5h12M4 8h12M4 11h12" stroke="#fff" />
  </Svg>
)

/* ---------- data ---------- */
const TABS: [string, number][] = [
  ['File', 77],
  ['Home', 68],
  ['Insert', 65],
  ['Page Layout', 110],
  ['Formulas', 89],
  ['Data', 60],
  ['Review', 77],
  ['View', 60],
  ['A-Tools', 81],
  ['Developer', 98],
  ['Add-Ins', 81],
]

const COLS = ['A', 'B', 'C', 'D', 'E', 'F', 'G', 'H', 'I', 'J', 'K', 'L', 'M']
const COL_WIDTHS = [80, 277, 80, 55, 135, 135, 80, 120, 512, 80, 80, 152, 74]
const ROW_NUMS = Array.from({ length: 28 }, (_, i) => i + 4)
const rowHeight = (r: number) => {
  if (r === 4) return 29
  if (r === 5) return 30
  if (r === 6) return 24
  if (r === 7) return 27
  if (r === 8) return 25
  if (r >= 28 && r <= 30) return 24
  if (r === 31) return 13
  return 26
}

const BOLD_HEAD: Record<string, string> = {
  A: 'Mã hàng',
  B: 'Tên hàng hóa',
  C: 'ĐVT',
  D: 'SL',
  E: 'Đơn giá',
  F: 'Thành tiền',
}
const CONTENT: Record<number, Record<string, string>> = {
  4: { A: 'Điện thoại', E: 'Ghi chú' },
  5: { A: 'Địa chỉ', E: 'PT Thanh toán', F: 'Tiền mặt', I: '-' },
  7: BOLD_HEAD,
  8: { I: 'Sub save()' },
  9: { I: 'Dim lastrow As Long' },
  11: { I: 'lastrow = Sheet1.Range("A" & Rows.Count).End(xlUp).Row' },
  14: { I: 'Sheet1.Range("B" & lastrow + 1).Value = Sheet1.Range("I2").Value' },
  15: { I: 'Sheet1.Range("D" & lastrow + 1).Value = Sheet1.Range("I3").Value' },
  16: { I: 'Sheet1.Range("E" & lastrow + 1).Value = Sheet1.Range("I4").Value' },
  17: { I: 'Sheet1.Range("F" & lastrow + 1).Value = Sheet1.Range("I5").Value' },
  19: { I: 'End Sub' },
  24: { E: 'Tổng cộng' },
  25: { B: 'Số tiền bằng chữ:' },
  27: { B: 'Ghi chú:' },
}

const cellProps = (r: number, c: string) => {
  const inForm = 'ABCDEF'.includes(c)
  let right = true
  let bottom: 'solid' | 'dotted' | 'none' = 'solid'
  let bg: string | undefined
  if (r === 4 || r === 5) {
    if ('ABEF'.includes(c)) right = false
    if (c === 'B' || c === 'F') bottom = 'none'
    if (c === 'I') {
      bg = r === 4 ? '#E2EFDA' : '#A9D08E'
      bottom = 'none'
      right = false
    }
  }
  if (r === 6 && inForm) bottom = 'none'
  if (r === 7 && inForm) {
    right = false
    bottom = 'none'
    bg = '#E2EFDA'
  }
  if (r >= 8 && r <= 23 && inForm) bottom = 'dotted'
  if (r === 29 && 'BCDEF'.includes(c)) {
    right = false
    bottom = 'dotted'
  }
  return {
    $right: right,
    $bottom: bottom,
    $bg: bg,
    $bold: (r === 7 && inForm) || (r === 24 && c === 'E'),
    $code: c === 'I',
    $raised: r <= 7,
    $align: (r === 7 && 'BCDEF'.includes(c) ? 'center' : r === 5 && c === 'I' ? 'right' : 'left') as
      | 'left'
      | 'center'
      | 'right',
    $selected: r === 24 && c === 'L',
  }
}

const Sheet = () => (
  <SheetView>
    <Grid
      $cols={`35px ${COL_WIDTHS.map(w => `${w}px`).join(' ')}`}
      $rows={`24px ${ROW_NUMS.map(r => `${rowHeight(r)}px`).join(' ')}`}
    >
      <Corner>
        <CornerTriangle />
      </Corner>
      {COLS.map(c => (
        <ColHead key={c} $sel={c === 'L'}>
          {c}
        </ColHead>
      ))}
      {ROW_NUMS.map(r => (
        <React.Fragment key={r}>
          <RowHead $sel={r === 24} $cut={r === 31}>
            {r}
          </RowHead>
          {COLS.map(c => (
            <Cell key={c} {...cellProps(r, c)}>
              {CONTENT[r]?.[c]}
            </Cell>
          ))}
        </React.Fragment>
      ))}
    </Grid>
    <ShapeStack>
      <Bevel $h={29} $clip>
        Đơn giá
      </Bevel>
      <Bevel $h={34}>Thành tiền</Bevel>
    </ShapeStack>
    <ArrowLayer width="1895" height="738" viewBox="0 0 1895 738">
      <path d="M957.5 341L330 151.5" stroke="#5B9BD5" strokeWidth="1.2" />
      <ArrowHead x={325.5} y={150} angle={16.8} />
      <path d="M973.5 360L246 657" stroke="#5B9BD5" strokeWidth="1.2" />
      <ArrowHead x={240} y={659.7} angle={-22.2} />
    </ArrowLayer>
    <Note $x={202} $y={263} $w={435} $h={176}>
      <NoteLine>{'làm sao để  nhận dữ liệu'}</NoteLine>
      <NoteLine $caps>trong PHẠM VI NHẬN</NoteLine>
      <NoteLine $caps>DỮ LIỆU MONG MUỐN ?</NoteLine>
    </Note>
    <Note $x={712} $y={502} $w={514} $h={189}>
      <NoteLine>Theo như code hiện tại thì dữ</NoteLine>
      <NoteLine>liệu sẽ đi xuống dòng cuối</NoteLine>
      <NoteLine>cùng (dòng 28)</NoteLine>
    </Note>
  </SheetView>
)

const Big: React.FC<{ w: number; icon: React.ReactNode; lines: string[]; caretAlone?: boolean }> = ({
  w,
  icon,
  lines,
  caretAlone,
}) => (
  <LargeButton $w={w}>
    <LargeIcon>{icon}</LargeIcon>
    {lines.map((l, i) =>
      i === lines.length - 1 && !caretAlone ? (
        <CaretLine key={l}>
          {l}
          <Caret />
        </CaretLine>
      ) : (
        <LargeText key={l}>{l}</LargeText>
      ),
    )}
    {caretAlone && (
      <CaretLine>
        <Caret />
      </CaretLine>
    )}
  </LargeButton>
)

const RibbonBar = () => (
  <Ribbon>
    <Group $w={188}>
      <GroupBody>
        <Big w={57} icon={<PasteIcon />} lines={['Paste']} caretAlone />
        <SmallColumn>
          <SmallRow>
            <SmallIcon>
              <CutIcon />
            </SmallIcon>
            Cut
          </SmallRow>
          <SmallRow>
            <SmallIcon>
              <CopyIcon />
            </SmallIcon>
            Copy <Caret />
          </SmallRow>
          <SmallRow>
            <SmallIcon>
              <PainterIcon />
            </SmallIcon>
            Format Painter
          </SmallRow>
        </SmallColumn>
      </GroupBody>
      <GroupLabel $launch>
        Clipboard
        <Launcher />
      </GroupLabel>
    </Group>
    <Group $w={235}>
      <GroupBody $pad={4} $column $top={10} $gap={11}>
        <ToolRow>
          <Combo $w={113}>
            <ComboFont>Calibri</ComboFont>
            <Caret />
          </Combo>
          <Combo $w={61}>
            <ComboFont>11</ComboFont>
            <Caret />
          </Combo>
          <Tool $w={25}>
            <GrowA up />
          </Tool>
          <Tool $w={25}>
            <GrowA />
          </Tool>
        </ToolRow>
        <ToolRow>
          <Tool $w={24}>
            <BoldTool>B</BoldTool>
          </Tool>
          <Tool $w={30}>
            <BoldTool $italic>I</BoldTool>
          </Tool>
          <Tool $w={20}>
            <BoldTool $under>U</BoldTool>
          </Tool>
          <Tool $w={20}>
            <Caret />
          </Tool>
          <ToolSep $w={1} />
          <Tool $w={32}>
            <BordersIcon />
          </Tool>
          <Tool $w={8}>
            <Caret />
          </Tool>
          <ToolSep $w={15} />
          <Tool $w={23}>
            <FillIcon />
          </Tool>
          <Tool $w={12}>
            <Caret />
          </Tool>
          <Tool $w={26}>
            <ColorA $bar="#FF0000">A</ColorA>
          </Tool>
          <Tool $w={12}>
            <Caret />
          </Tool>
        </ToolRow>
      </GroupBody>
      <GroupLabel $launch>
        Font
        <Launcher />
      </GroupLabel>
    </Group>
    <Group $w={309}>
      <GroupBody $pad={4} $column $top={10} $gap={11}>
        <ToolRow>
          <Tool $w={26}>
            <Lines y={-2} />
          </Tool>
          <Tool $w={26}>
            <Lines y={1} />
          </Tool>
          <Tool $w={26} $active>
            <Lines y={4} />
          </Tool>
          <ToolSep $w={8} />
          <Tool $w={27}>
            <OrientIcon />
          </Tool>
          <Tool $w={7}>
            <Caret />
          </Tool>
          <Tool $w={20} />
          <ToolSep $w={8} />
          <Tool $w={26}>
            <WrapIcon />
          </Tool>
          Wrap Text
        </ToolRow>
        <ToolRow>
          <Tool $w={26}>
            <Lines align="left" />
          </Tool>
          <Tool $w={26}>
            <Lines />
          </Tool>
          <Tool $w={26}>
            <Lines align="right" />
          </Tool>
          <ToolSep $w={8} />
          <Tool $w={27}>
            <IndentIcon out />
          </Tool>
          <Tool $w={26}>
            <IndentIcon />
          </Tool>
          <ToolSep $w={8} />
          <Tool $w={27}>
            <MergeIcon />
          </Tool>
          Merge &amp; Center
          <Tool $w={22}>
            <Caret />
          </Tool>
        </ToolRow>
      </GroupBody>
      <GroupLabel $launch>
        Alignment
        <Launcher />
      </GroupLabel>
    </Group>
    <Group $w={162}>
      <GroupBody $pad={5} $column $top={10} $gap={11}>
        <ToolRow>
          <Combo $w={151}>
            General
            <Caret />
          </Combo>
        </ToolRow>
        <ToolRow>
          <Tool $w={24}>
            <SymbolTool $size={19}>$</SymbolTool>
          </Tool>
          <Tool $w={16}>
            <Caret />
          </Tool>
          <Tool $w={24}>
            <SymbolTool $size={18}>%</SymbolTool>
          </Tool>
          <Tool $w={28}>
            <SymbolTool $size={18} $lift={12}>
              <b>,</b>
            </SymbolTool>
          </Tool>
          <ToolSep $w={6} />
          <Tool $w={26}>
            <DecIcon />
          </Tool>
          <Tool $w={26}>
            <DecIcon more />
          </Tool>
        </ToolRow>
      </GroupBody>
      <GroupLabel $launch>
        Number
        <Launcher />
      </GroupLabel>
    </Group>
    <Group $w={584}>
      <GroupBody $pad={5}>
        <Big w={84} icon={<CondIcon />} lines={['Conditional', 'Formatting']} />
        <Big w={74} icon={<TableIcon />} lines={['Format as', 'Table']} />
        <Gallery>
          <StyleGrid>
            <StyleCell $bg="#fff" $fg="#000" $selected>
              Normal
            </StyleCell>
            <StyleCell $bg="#FFC7CE" $fg="#9C0006">
              Bad
            </StyleCell>
            <StyleCell $bg="#C6EFCE" $fg="#006100">
              Good
            </StyleCell>
            <StyleCell $bg="#FFEB9C" $fg="#9C5700">
              Neutral
            </StyleCell>
            <StyleCell $bg="#F2F2F2" $fg="#FA7D00" $bold $border="1px solid #7F7F7F">
              Calculation
            </StyleCell>
            <StyleCell $bg="#A5A5A5" $fg="#fff" $bold $border="3px double #3F3F3F">
              Check Cell
            </StyleCell>
          </StyleGrid>
          <GalleryScroll>
            <GalleryButton $bg="#E6E6E6">
              <GalleryUp />
            </GalleryButton>
            <GalleryButton>
              <GalleryDown />
            </GalleryButton>
            <GalleryButton>
              <GalleryMore />
            </GalleryButton>
          </GalleryScroll>
        </Gallery>
      </GroupBody>
      <GroupLabel>Styles</GroupLabel>
    </Group>
    <Group $w={160}>
      <GroupBody $pad={4}>
        <Big w={51} icon={<InsertIcon />} lines={['Insert']} caretAlone />
        <Big w={50} icon={<DeleteIcon />} lines={['Delete']} caretAlone />
        <Big w={52} icon={<FormatIcon />} lines={['Format']} caretAlone />
      </GroupBody>
      <GroupLabel>Cells</GroupLabel>
    </Group>
    <Group $w={222}>
      <GroupBody $pad={9}>
        <SmallColumn $w={103}>
          <SmallRow $h={27}>
            <SmallIcon $w={17}>
              <SigmaIcon />
            </SmallIcon>
            AutoSum
            <WideCaret />
          </SmallRow>
          <SmallRow $h={26}>
            <SmallIcon $w={17}>
              <FillDown />
            </SmallIcon>
            Fill
            <Caret />
          </SmallRow>
          <SmallRow $h={30}>
            <SmallIcon $w={17}>
              <Eraser />
            </SmallIcon>
            Clear
            <Caret />
          </SmallRow>
        </SmallColumn>
        <Big w={52} icon={<SortIcon />} lines={['Sort &', 'Filter']} />
        <Big w={52} icon={<FindIcon />} lines={['Find &', 'Select']} />
      </GroupBody>
      <GroupLabel>Editing</GroupLabel>
    </Group>
    <Collapse>
      <ChevronUp />
    </Collapse>
  </Ribbon>
)

const App = () => (
  <Window>
    <Global />
    <TitleBar>
      <Qat>
        <SaveIcon />
        <Tool $w={6} />
        <UndoIcon tone="#fff" />
        <Caret $tone="#fff" />
        <Tool $w={5} />
        <RedoIcon tone="#5E9A78" />
        <Caret $tone="#5E9A78" />
        <Tool $w={6} />
        <CustomizeIcon />
      </Qat>
      <Title>VD1 - Excel</Title>
      <WinButtons>
        <WinButton>
          <RibbonOptions />
        </WinButton>
        <WinButton>
          <Minimize />
        </WinButton>
        <WinButton>
          <Restore />
        </WinButton>
        <WinButton>
          <CloseX />
        </WinButton>
      </WinButtons>
    </TitleBar>
    <TabRow>
      {TABS.map(([t, w]) => (
        <Tab key={t} $w={w} $active={t === 'Home'} $shift={t === 'File' ? 5 : 0}>
          {t}
        </Tab>
      ))}
      <TellMe>
        <Bulb />
        Tell me what you want to do...
      </TellMe>
      <SignIn>Sign in</SignIn>
      <Share>
        <ShareIcon />
        Share
      </Share>
    </TabRow>
    <RibbonBar />
    <FormulaBar>
      <NameBox $w={127}>
        L24
        <Caret />
      </NameBox>
      <Dots>
        <GripDots />
      </Dots>
      <Box $w={136}>
        <FormulaButton>
          <XMark />
        </FormulaButton>
        <FormulaButton>
          <CheckMark />
        </FormulaButton>
        <FormulaButton>
          <Fx>fx</Fx>
        </FormulaButton>
      </Box>
      <FormulaInput>
        <ChevronDown />
      </FormulaInput>
    </FormulaBar>
    <SheetArea>
      <Sheet />
      <VScroll>
        <ScrollButton $h={19}>
          <MiniTri dir="up" />
        </ScrollButton>
        <VThumb />
        <ScrollButton $h={17}>
          <MiniTri dir="down" />
        </ScrollButton>
      </VScroll>
    </SheetArea>
    <SheetTabs>
      <TabNav>
        <MiniTri dir="left" tone="#C2C2C2" />
        <MiniTri dir="right" tone="#C2C2C2" />
      </TabNav>
      <SheetTab>Sheet1</SheetTab>
      <AddSheet>+</AddSheet>
      <TabDots>
        <GripDots />
      </TabDots>
      <HScroll>
        <HButton>
          <MiniTri dir="left" />
        </HButton>
        <HThumb />
        <HTrack />
        <HButton>
          <MiniTri dir="right" />
        </HButton>
      </HScroll>
    </SheetTabs>
    <StatusBar>
      Ready
      <StatusMacro>
        <MacroIcon />
      </StatusMacro>
      <ViewButtons>
        <ViewButton $active>
          <NormalView />
        </ViewButton>
        <ViewButton>
          <PageView />
        </ViewButton>
        <ViewButton>
          <BreakView />
        </ViewButton>
        <ViewButton $w={20}>
          <ZoomSign>-</ZoomSign>
        </ViewButton>
        <ZoomSlider>
          <ZoomThumb />
        </ZoomSlider>
        <ViewButton $w={22}>
          <ZoomSign>+</ZoomSign>
        </ViewButton>
        <ViewButton $w={51}>100%</ViewButton>
      </ViewButtons>
    </StatusBar>
    <Taskbar>
      <StartButton>
        <WinLogo />
      </StartButton>
      <SearchBox>
        <SearchGlyph />
        Type here to search
      </SearchBox>
      <TaskItem>
        <CortanaRing />
      </TaskItem>
      <TaskItem>
        <EdgeIcon />
      </TaskItem>
      <TaskItem $running>
        <FolderIcon />
      </TaskItem>
      <TaskItem $running>
        <ChromeIcon />
      </TaskItem>
      <TaskItem $running>
        <ZaloIcon />
      </TaskItem>
      <TaskItem $running $active>
        <ExcelIcon />
      </TaskItem>
      <Tray>
        <TrayTool $w={36}>
          <RainIcon />
        </TrayTool>
        <Weather>83°F  Rain</Weather>
        <TrayTool $w={24}>
          <TrayUp />
        </TrayTool>
        <TrayTool $w={34}>
          <Battery />
        </TrayTool>
        <TrayTool $w={29}>
          <Wifi />
        </TrayTool>
        <TrayTool $w={29}>
          <Speaker />
        </TrayTool>
        <TrayTool $w={31}>
          <Cloud />
        </TrayTool>
        <TrayTool $w={48}>ENG</TrayTool>
        <Clock>
          5:40 PM
          <br />
          14/07/2021
        </Clock>
        <Notify>
          <NotifyGlyph />
          <NotifyBadge>1</NotifyBadge>
        </Notify>
      </Tray>
    </Taskbar>
  </Window>
)

export default App
